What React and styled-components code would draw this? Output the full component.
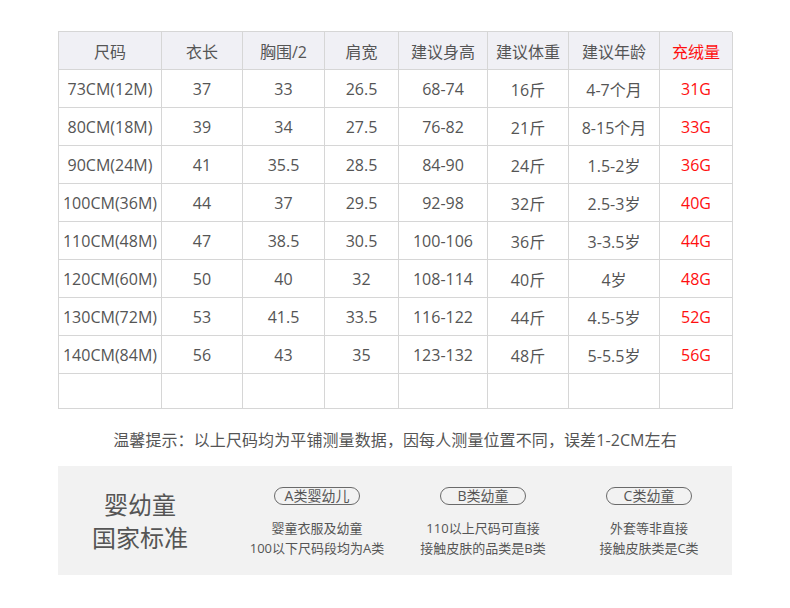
import React from "react";
import styled, { createGlobalStyle } from "styled-components";

const Global = createGlobalStyle`
  html, body { margin: 0; padding: 0; background: #fff; }
  body { font-family: "Open Sans", "Noto Sans CJK SC", sans-serif; color: #555; }
`;

const Page = styled.div`
  width: 674px;
  margin: 0 auto;
  padding-top: 31px;
`;

const Grid = styled.div`
  display: grid;
  grid-template-columns: 103px 81px 82px 74px 89px 81px 91px 73px;
  grid-template-rows: 38px repeat(8, 38px) 35px;
  border-top: 1px solid #d6d6d6;
  border-left: 1px solid #d6d6d6;
`;

const Cell = styled.div`
  box-sizing: border-box;
  display: flex;
  align-items: center;
  justify-content: center;
  border-right: 1px solid #d6d6d6;
  border-bottom: 1px solid #d6d6d6;
  font-size: 16px;
  white-space: nowrap;
  background: ${(p) => (p.$head ? "#f0f0f5" : "#fff")};
  color: ${(p) => (p.$red ? "#ff0f0f" : "#555")};
`;

const Note = styled.p`
  margin: 19px 0 14px;
  text-align: center;
  font-size: 16px;
  line-height: 24px;
  letter-spacing: 0.1px;
  color: #555;
`;

const Panel = styled.div`
  display: grid;
  grid-template-columns: 176px repeat(3, 166px);
  height: 109px;
  background: #f2f2f2;
`;

const Title = styled.div`
  padding-right: 12px;
  display: flex;
  flex-direction: column;
  align-items: center;
  justify-content: center;
  font-size: 24px;
  line-height: 33px;
  color: #555;
`;

const Col = styled.div`
  display: flex;
  flex-direction: column;
  align-items: center;
  padding-top: 21px;
`;

const Pill = styled.div`
  box-sizing: border-box;
  width: 86px;
  height: 18px;
  border: 1px solid #6a6a6a;
  border-radius: 9px;
  display: flex;
  align-items: center;
  justify-content: center;
  font-size: 14px;
  line-height: 16px;
  color: #555;
`;

const Desc = styled.div`
  margin-top: 14px;
  font-size: 13px;
  line-height: 19.5px;
  text-align: center;
  color: #555;
  white-space: nowrap;
`;

const headers = ["尺码", "衣长", "胸围/2", "肩宽", "建议身高", "建议体重", "建议年龄", "充绒量"];
const rows = [
  ["73CM(12M)", "37", "33", "26.5", "68-74", "16斤", "4-7个月", "31G"],
  ["80CM(18M)", "39", "34", "27.5", "76-82", "21斤", "8-15个月", "33G"],
  ["90CM(24M)", "41", "35.5", "28.5", "84-90", "24斤", "1.5-2岁", "36G"],
  ["100CM(36M)", "44", "37", "29.5", "92-98", "32斤", "2.5-3岁", "40G"],
  ["110CM(48M)", "47", "38.5", "30.5", "100-106", "36斤", "3-3.5岁", "44G"],
  ["120CM(60M)", "50", "40", "32", "108-114", "40斤", "4岁", "48G"],
  ["130CM(72M)", "53", "41.5", "33.5", "116-122", "44斤", "4.5-5岁", "52G"],
  ["140CM(84M)", "56", "43", "35", "123-132", "48斤", "5-5.5岁", "56G"],
  ["", "", "", "", "", "", "", ""],
];

const cats = [
  { pill: "A类婴幼儿", lines: ["婴童衣服及幼童", "100以下尺码段均为A类"] },
  { pill: "B类幼童", lines: ["110以上尺码可直接", "接触皮肤的品类是B类"] },
  { pill: "C类幼童", lines: ["外套等非直接", "接触皮肤类是C类"] },
];

export default function App() {
  return (
    <>
      <Global />
      <Page>
        <Grid>
          {headers.map((h, i) => (
            <Cell key={h} $head $red={i === 7}>{h}</Cell>
          ))}
          {rows.map((r, ri) =>
            r.map((c, ci) => (
              <Cell key={ri + "-" + ci} $red={ci === 7}>{c}</Cell>
            ))
          )}
        </Grid>
        <Note>温馨提示：以上尺码均为平铺测量数据，因每人测量位置不同，误差1-2CM左右</Note>
        <Panel>
          <Title>
            <span>婴幼童</span>
            <span>国家标准</span>
          </Title>
          {cats.map((c) => (
            <Col key={c.pill}>
              <Pill>{c.pill}</Pill>
              <Desc>
                {c.lines[0]}
                <br />
                {c.lines[1]}
              </Desc>
            </Col>
          ))}
        </Panel>
      </Page>
    </>
  );
}
